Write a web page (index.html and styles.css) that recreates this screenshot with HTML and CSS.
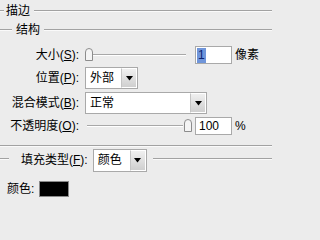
FILE: index.html
```html
<!DOCTYPE html>
<html lang="zh-CN">
<head>
<meta charset="utf-8">
<title>描边</title>
<link rel="stylesheet" href="styles.css">
</head>
<body>
<div class="panel">
  <div class="head head-main">
    <span class="dash dash-main"></span>
    <span class="head-text">描边</span>
    <span class="rule"></span>
  </div>
  <div class="head head-group">
    <span class="dash dash-group"></span>
    <span class="head-text group-text">结构</span>
    <span class="rule"></span>
  </div>
  <div class="form">
    <label class="lbl">大小(<u>S</u>):</label>
    <div class="ctl">
      <div class="slider">
        <span class="track"></span>
        <svg class="thumb thumb-left" width="8" height="13" viewBox="0 0 8 13"><path d="M0.5 12.5 V4 Q0.5 0.5 4 0.5 Q7.5 0.5 7.5 4 V12.5 Z" fill="#f4f4f4" stroke="#8c8c8c"/></svg>
      </div>
      <div class="field"><span class="sel">1</span></div>
      <span class="unit">像素</span>
    </div>

    <label class="lbl">位置(<u>P</u>):</label>
    <div class="ctl">
      <div class="select select-pos">
        <span class="value">外部</span>
        <span class="btn"><svg width="7" height="5" viewBox="0 0 7 5"><polygon points="0,0 7,0 3.5,4.5" fill="#000"/></svg></span>
      </div>
    </div>

    <label class="lbl">混合模式(<u>B</u>):</label>
    <div class="ctl">
      <div class="select select-blend">
        <span class="value">正常</span>
        <span class="btn"><svg width="7" height="5" viewBox="0 0 7 5"><polygon points="0,0 7,0 3.5,4.5" fill="#000"/></svg></span>
      </div>
    </div>

    <label class="lbl">不透明度(<u>O</u>):</label>
    <div class="ctl">
      <div class="slider">
        <span class="track track-op"></span>
        <svg class="thumb thumb-right" width="8" height="13" viewBox="0 0 8 13"><path d="M0.5 12.5 V4 Q0.5 0.5 4 0.5 Q7.5 0.5 7.5 4 V12.5 Z" fill="#f4f4f4" stroke="#8c8c8c"/></svg>
      </div>
      <div class="field field-op">100</div>
      <span class="unit">%</span>
    </div>
  </div>

  <div class="hr"></div>

  <div class="fill-row">
    <span class="dash dash-fill"></span>
    <label class="fill-lbl">填充类型(<u>F</u>):</label>
    <div class="select select-fill">
      <span class="value">颜色</span>
      <span class="btn"><svg width="7" height="5" viewBox="0 0 7 5"><polygon points="0,0 7,0 3.5,4.5" fill="#000"/></svg></span>
    </div>
    <span class="rule rule-fill"></span>
  </div>

  <div class="color-row">
    <label class="color-lbl">颜色:</label>
    <span class="swatch"></span>
  </div>
</div>
</body>
</html>
```

FILE: styles.css
```css
* { box-sizing: border-box; }

body {
  margin: 0;
  width: 272px;
  height: 208px;
  overflow: hidden;
  background: #ececec;
  color: #000;
  font-family: "Liberation Sans", "Noto Sans CJK SC", sans-serif;
  font-size: 12px;
  line-height: 14px;
}

.panel {
  display: flex;
  flex-direction: column;
}

.head {
  display: flex;
  align-items: center;
}

.head-main { height: 22px; }
.head-group { height: 16px; }

.dash,
.rule {
  height: 2px;
  border-top: 1px solid #a2a2a2;
  border-bottom: 1px solid #fafafa;
}

.rule { flex: 1; }

.dash-main { width: 4px; }
.dash-group { width: 12px; }

.head-text { margin: 0 4px 0 2px; }
.group-text { margin: 0 4px; }

.form {
  margin-top: 8px;
  display: grid;
  grid-template-columns: 79px 1fr;
  grid-template-rows: 18px 22px 22px 18px;
  column-gap: 6px;
  row-gap: 3px;
  align-items: center;
}

.lbl {
  text-align: right;
  white-space: nowrap;
}

.ctl {
  display: flex;
  align-items: center;
  height: 100%;
}

.slider {
  position: relative;
  width: 107px;
  height: 18px;
  display: flex;
  align-items: flex-start;
}

.track {
  flex: 1;
  margin: 8px 6px 0 1px;
  height: 2px;
  border-top: 1px solid #a8a8a8;
  border-bottom: 1px solid #ffffff;
}

.track-op { margin: 8px 9px 0 2px; }

.thumb {
  position: absolute;
  top: 2px;
}

.thumb-left { left: 0; }
.thumb-right { right: 0; }

.field {
  margin-left: 3px;
  width: 37px;
  height: 18px;
  border: 1px solid #a9a9a9;
  background: #fff;
  padding: 1px 0 0 1px;
  line-height: 15px;
}

.field-op { padding-left: 3px; }

.sel {
  display: inline-block;
  background: #6f95da;
  color: #0d2470;
  padding: 0 1px;
}

.unit { margin-left: 3px; }

.select {
  display: flex;
  height: 22px;
  border: 1px solid #a9a9a9;
  background: #fff;
}

.select-pos { width: 53px; }
.select-blend { width: 122px; }

.value {
  flex: 1;
  padding-left: 4px;
  line-height: 20px;
}

.btn {
  width: 16px;
  border: 1px solid #ffffff;
  border-left: 1px solid #c4c4c4;
  background: linear-gradient(#f0f0f0, #cfcfcf);
  display: flex;
  align-items: center;
  justify-content: center;
}

.hr {
  margin-top: 10px;
  height: 2px;
  border-top: 1px solid #a2a2a2;
  border-bottom: 1px solid #fafafa;
}

.fill-row {
  margin-top: 2px;
  display: flex;
  align-items: flex-start;
  height: 23px;
}

.dash-fill {
  width: 9px;
  margin-top: 9px;
}

.fill-lbl {
  margin-left: 12px;
  line-height: 23px;
  white-space: nowrap;
}

.select-fill {
  margin-left: 5px;
  width: 54px;
  height: 23px;
}

.select-fill .value { line-height: 21px; }

.rule-fill {
  margin: 9px 0 0 6px;
}

.color-row {
  margin-top: 9px;
  display: flex;
  align-items: center;
  height: 16px;
}

.color-lbl { margin-left: 7px; }

.swatch {
  margin-left: 5px;
  width: 30px;
  height: 16px;
  background: #000;
  border: 1px solid #8a8a8a;
}
```
